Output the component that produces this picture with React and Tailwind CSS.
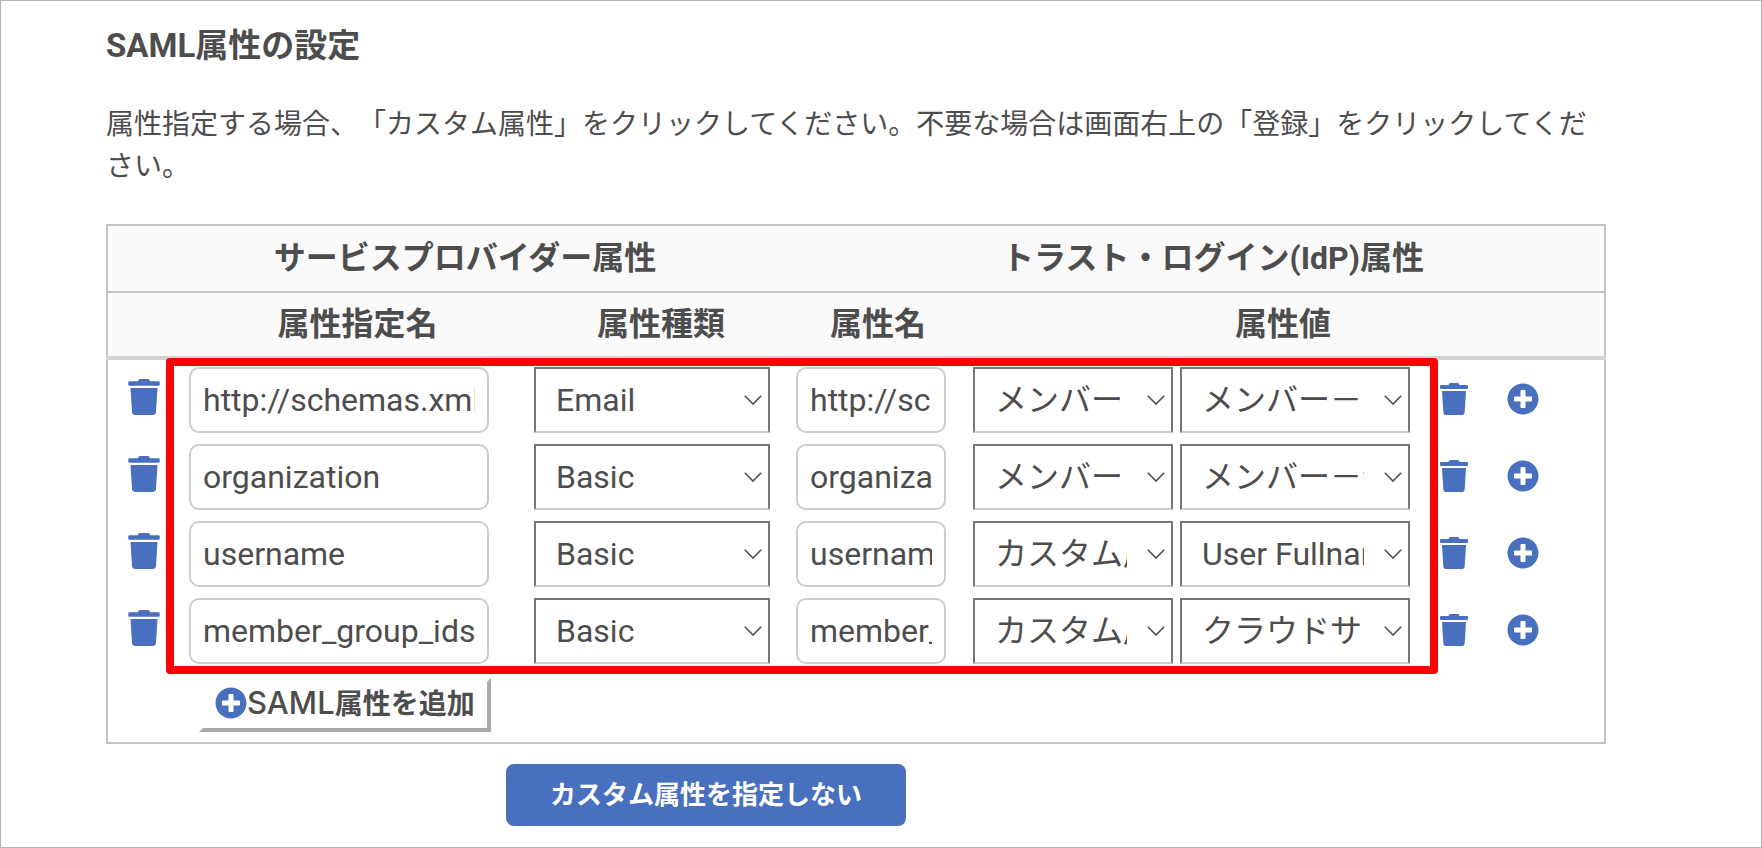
import React from "react";
import { FaPlusCircle, FaTrash } from "react-icons/fa";

const ROWS = [
  {
    name: "http://schemas.xmlsoap.org/ws/2005/05/identity/claims/emailaddress",
    type: "Email",
    attribute: "http://schemas.xmlsoap.org/ws/2005/05/identity/claims/emailaddress",
    source: "メンバー",
    value: "メンバー－メールアドレス",
  },
  {
    name: "organization",
    type: "Basic",
    attribute: "organization",
    source: "メンバー",
    value: "メンバー－会社名",
  },
  {
    name: "username",
    type: "Basic",
    attribute: "username",
    source: "カスタム属性",
    value: "User Fullname",
  },
  {
    name: "member_group_ids",
    type: "Basic",
    attribute: "member_group_ids",
    source: "カスタム属性",
    value: "クラウドサイン",
  },
];

const TYPES = ["Email", "Basic"];
const SOURCES = ["メンバー", "カスタム属性"];
const VALUES = ROWS.map((row) => row.value);

function TextField({ label, value, width }) {
  return (
    <input
      type="text"
      aria-label={label}
      defaultValue={value}
      className={`${width} block h-[66px] rounded-[10px] border-2 border-[#cccccc] bg-white px-3 text-[32px]`}
    />
  );
}

function SelectField({ label, value, options, width }) {
  return (
    <div className={`${width} relative shrink-0`}>
      <select
        aria-label={label}
        defaultValue={value}
        className="block h-[66px] w-full appearance-none overflow-hidden border-2 border-[#767676] border-b-[#cccccc] bg-white pr-11 pl-5 text-[32px]"
      >
        {options.map((option) => (
          <option key={option}>{option}</option>
        ))}
      </select>
      <svg
        viewBox="0 0 18 10"
        className="pointer-events-none absolute top-7 right-2 h-[10px] w-[18px]"
        fill="none"
        stroke="#4d4d4d"
        strokeWidth="1.6"
        aria-hidden="true"
      >
        <path d="M0.8 0.8 L9 9 L17.2 0.8" />
      </svg>
    </div>
  );
}

function AttributeRow({ row }) {
  return (
    <tr>
      <td className="pt-[7px] pr-0 pb-[11px] pl-5">
        <button type="button" aria-label="属性を削除" className="block text-[#4870be]">
          <FaTrash className="h-9 w-8" />
        </button>
      </td>
      <td className="pt-[7px] pb-1 pl-1">
        <TextField label="属性指定名" value={row.name} width="w-[300px]" />
      </td>
      <td className="pt-[7px] pb-1 pl-1">
        <SelectField label="属性種類" value={row.type} options={TYPES} width="w-[236px]" />
      </td>
      <td className="pt-[7px] pb-1 pl-1">
        <TextField label="属性名" value={row.attribute} width="w-[150px]" />
      </td>
      <td className="pt-[7px] pb-1 pl-[9px]">
        <div className="flex gap-[7px]">
          <SelectField label="属性値の種別" value={row.source} options={SOURCES} width="w-[200px]" />
          <SelectField label="属性値" value={row.value} options={VALUES} width="w-[230px]" />
        </div>
      </td>
      <td className="pt-[7px] pb-[6px]">
        <button type="button" aria-label="属性値を削除" className="block text-[#4870be]">
          <FaTrash className="h-8 w-7" />
        </button>
      </td>
      <td className="pt-[7px] pb-[6px]">
        <button type="button" aria-label="属性値を追加" className="block text-[#4870be]">
          <FaPlusCircle className="size-8" />
        </button>
      </td>
    </tr>
  );
}

export default function App() {
  return (
    <main className="min-h-screen border border-[#b4b4b4] bg-white pt-[21px] pr-[155px] pb-5 pl-[105px] font-['Roboto','Noto_Sans_CJK_JP',sans-serif] text-[#4d4d4d] [text-spacing-trim:space-all]">
      <h1 className="text-[33px] leading-[48px] font-bold">SAML属性の設定</h1>
      <p className="mt-[34px] text-[28px] leading-[42px]">
        属性指定する場合、「カスタム属性」をクリックしてください。不要な場合は画面右上の「登録」をクリックしてください。
      </p>

      <div className="relative mt-9">
        <table className="w-full table-fixed border-collapse border-2 border-[#c4c4c4]">
          <colgroup>
            <col className="w-[78px]" />
            <col className="w-[345px]" />
            <col className="w-[262px]" />
            <col className="w-[172px]" />
            <col className="w-[476px]" />
            <col className="w-[67px]" />
            <col />
          </colgroup>
          <thead className="bg-[#fafafa] text-[32px] leading-[48px]">
            <tr className="border-b-2 border-[#c4c4c4]">
              <th colSpan={3} className="pt-2 pb-[9px] pl-[30px]">
                サービスプロバイダー属性
              </th>
              <th colSpan={4} className="pt-2 pb-[9px] pl-[30px]">
                トラスト・ログイン(IdP)属性
              </th>
            </tr>
            <tr className="border-b-4 border-[#d2d2d2]">
              <td />
              <th className="pt-[7px] pb-2">属性指定名</th>
              <th className="pt-[7px] pb-2">属性種類</th>
              <th className="pt-[7px] pb-2">属性名</th>
              <th colSpan={3} className="pt-[7px] pr-[2px] pb-2">
                属性値
              </th>
            </tr>
          </thead>
          <tbody>
            {ROWS.map((row) => (
              <AttributeRow key={row.name} row={row} />
            ))}
            <tr>
              <td />
              <td colSpan={6} className="py-[10px] pl-[14px]">
                <button
                  type="button"
                  className="flex h-[54px] items-center border-4 border-white border-r-[#aaaaaa] border-b-[#aaaaaa] bg-white px-3 pb-1 text-[28px] font-bold"
                >
                  <FaPlusCircle className="size-8 text-[#4870be]" />
                  <span>
                    <span className="font-['Inter',sans-serif] text-[31px] font-medium">SAML</span>
                    属性を追加
                  </span>
                </button>
              </td>
            </tr>
          </tbody>
        </table>
        <div
          className="pointer-events-none absolute top-[134px] bottom-[70px] left-[60px] w-[1272px] rounded-[4px] border-8 border-[#ff0000]"
          aria-hidden="true"
        />
      </div>

      <button
        type="button"
        className="mt-5 ml-[400px] block h-[62px] w-[400px] rounded-lg bg-[#4870be] text-[26px] font-bold text-white"
      >
        カスタム属性を指定しない
      </button>
    </main>
  );
}
